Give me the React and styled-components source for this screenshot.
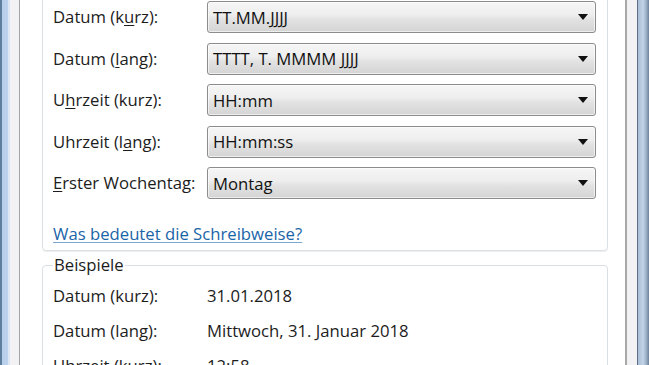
import React from "react";
import styled, { createGlobalStyle } from "styled-components";

const GlobalStyle = createGlobalStyle`
  html, body {
    margin: 0;
    padding: 0;
    background: #ffffff;
    overflow: hidden;
  }
  body {
    font-family: "Open Sans", "Noto Sans", "Liberation Sans", sans-serif;
  }
`;

const Window = styled.div`
  display: flex;
  width: 649px;
  height: 365px;
  overflow: hidden;
`;

const Frame = styled.div`
  flex: 0 0 ${(p) => p.$w}px;
  background: ${(p) => p.$bg};
`;

const DialogPad = styled.div`
  flex: 0 0 ${(p) => p.$w}px;
  background: #f2f2f4;
`;

const TabPage = styled.div`
  flex: 1;
  background: #ffffff;
  border-left: 1px solid #a3a3a3;
  border-right: 2px solid #a8a8a8;
  padding: 0 17px 0 22px;
  overflow: hidden;
`;

const Content = styled.div`
  margin-top: -21px;
  display: flex;
  flex-direction: column;
`;

const GroupBox = styled.div`
  display: flex;
  flex-direction: column;
  border: 1px solid #d9dfe3;
  border-radius: 4px;
  box-shadow: inset 0 0 0 1px #ffffff, 0 1px 0 #eeeeee;
  padding: 21px 11px 6px 10px;
`;

const FormGrid = styled.div`
  display: grid;
  grid-template-columns: 154px 1fr;
  grid-auto-rows: 32px;
  row-gap: 9.5px;
  align-items: center;
`;

const Label = styled.span`
  font-size: 16.7px;
  line-height: 20px;
  color: #1c1c1c;

  u {
    text-decoration: underline;
    text-underline-offset: 2px;
  }
`;

const Combo = styled.div`
  box-sizing: border-box;
  height: 32px;
  display: flex;
  align-items: center;
  justify-content: space-between;
  padding: 0 7px 0 5px;
  border: 1px solid #8c8c8c;
  border-radius: 3px;
  background: linear-gradient(
    to bottom,
    #f6f6f6 0%,
    #eeeeee 42%,
    #e2e2e2 58%,
    #d4d4d4 100%
  );
  box-shadow: inset 0 0 0 1px rgba(255, 255, 255, 0.6);
  font-size: 16.7px;
  color: #111111;
`;

const Arrow = styled.span`
  width: 0;
  height: 0;
  border-left: 5px solid transparent;
  border-right: 5px solid transparent;
  border-top: 6px solid #111111;
`;

const HelpLink = styled.a`
  display: block;
  margin-top: 25px;
  align-self: flex-start;
  font-size: 16.7px;
  line-height: 20px;
  color: #1a64a8;
  text-decoration: underline;
  text-decoration-color: #7aa6cf;
  text-underline-offset: 2px;
  cursor: pointer;
`;

const Examples = styled.fieldset`
  margin: 4px 0 0 0;
  padding: 0 10px 40px 10px;
  border: 1px solid #d9dfe3;
  border-radius: 4px;
  box-shadow: inset 0 0 0 1px #ffffff;
`;

const Legend = styled.legend`
  padding: 0 1px;
  font-size: 16.7px;
  line-height: 20px;
  color: #1c1c1c;
`;

const ExampleGrid = styled.div`
  margin-top: 11px;
  display: grid;
  grid-template-columns: 154px 1fr;
  grid-auto-rows: 20px;
  row-gap: 15px;
  font-size: 16.7px;
  line-height: 20px;
  color: #1c1c1c;
`;

const formats = [
  { label: ["Datum (k", "u", "rz):"], value: "TT.MM.JJJJ" },
  { label: ["Datum (", "l", "ang):"], value: "TTTT, T. MMMM JJJJ" },
  { label: ["U", "h", "rzeit (kurz):"], value: "HH:mm" },
  { label: ["Uhrzeit (l", "a", "ng):"], value: "HH:mm:ss" },
  { label: ["", "E", "rster Wochentag:"], value: "Montag" },
];

const examples = [
  ["Datum (kurz):", "31.01.2018"],
  ["Datum (lang):", "Mittwoch, 31. Januar 2018"],
  ["Uhrzeit (kurz):", "12:58"],
  ["Uhrzeit (lang):", "12:58:44"],
];

export default function App() {
  return (
    <>
      <GlobalStyle />
      <Window>
        <Frame $w={10} $bg="linear-gradient(to right, #5f7f9f 0, #5f7f9f 2px, #b7cfea 2px, #bcd3ec 8px, #dce7f3 8px)" />
        <DialogPad $w={9} />
        <TabPage>
          <Content>
            <GroupBox>
              <FormGrid>
                {formats.map((f) => (
                  <React.Fragment key={f.value}>
                    <Label>
                      {f.label[0]}
                      <u>{f.label[1]}</u>
                      {f.label[2]}
                    </Label>
                    <Combo>
                      <span>{f.value}</span>
                      <Arrow />
                    </Combo>
                  </React.Fragment>
                ))}
              </FormGrid>
              <HelpLink>Was bedeutet die Schreibweise?</HelpLink>
            </GroupBox>
            <Examples>
              <Legend>Beispiele</Legend>
              <ExampleGrid>
                {examples.map(([k, v]) => (
                  <React.Fragment key={k}>
                    <span>{k}</span>
                    <span>{v}</span>
                  </React.Fragment>
                ))}
              </ExampleGrid>
            </Examples>
          </Content>
        </TabPage>
        <DialogPad $w={10} />
        <Frame $w={12} $bg="linear-gradient(to right, #5d6f84 0, #5d6f84 1px, #a9bdd4 1px, #c3d4e8 6px, #9fb3c9 9px, #6e839b 12px)" />
      </Window>
    </>
  );
}
